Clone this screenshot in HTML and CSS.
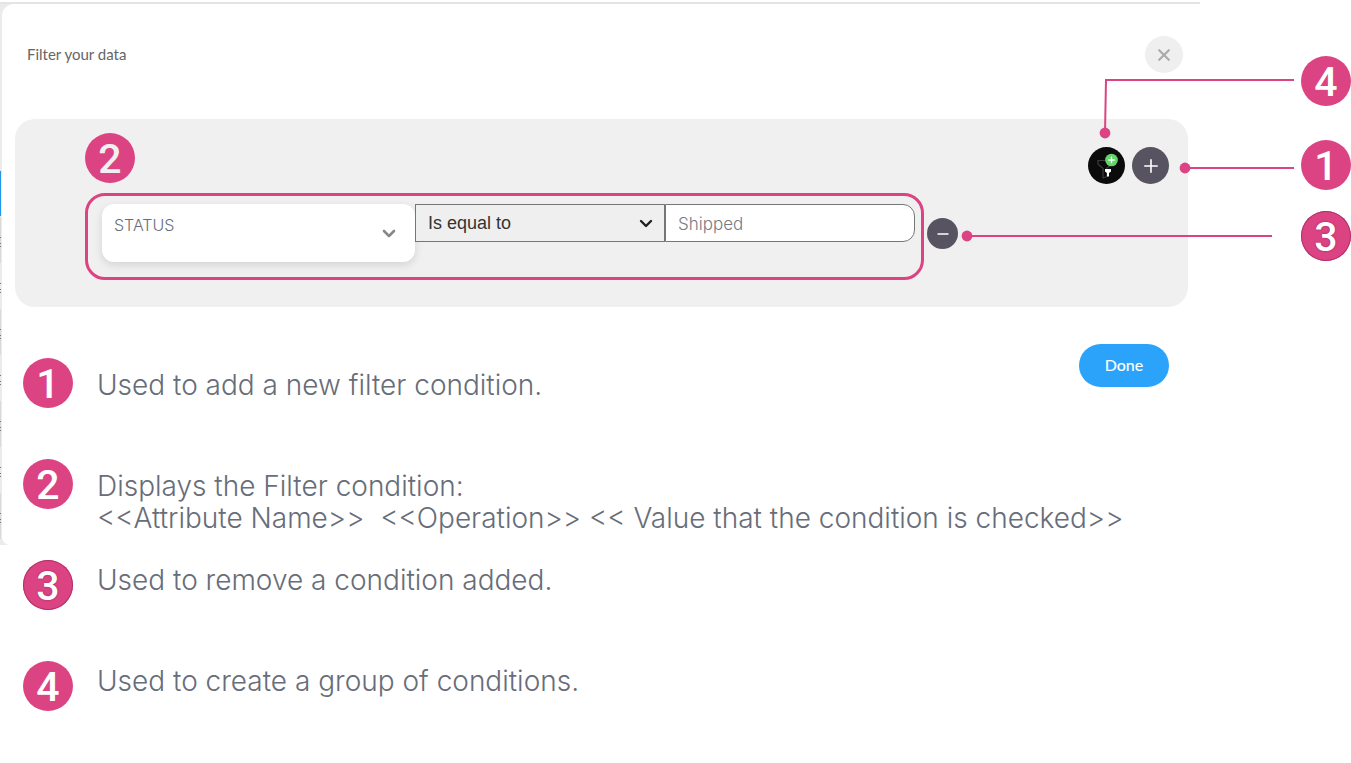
FILE: index.html
```html
<!DOCTYPE html>
<html lang="en">
<head>
<meta charset="utf-8">
<title>Filter your data</title>
<link rel="stylesheet" href="styles.css">
</head>
<body>
<main class="stage">
  <div class="backdrop" aria-hidden="true"><div class="sheet"></div></div>

  <div class="content">
    <header class="header">
      <h1 class="title">Filter your data</h1>
      <button class="close" type="button" aria-label="Close">
        <svg width="14" height="14" viewBox="0 0 14 14"><path d="M2.2 2.2 11.800 11.800M11.800 2.200 2.200 11.800" fill="none" stroke="#aaa" stroke-width="2.200" stroke-linecap="round"/></svg>
      </button>
    </header>

    <section class="panel" aria-label="Filter conditions">
      <div class="panel-head">
        <span class="badge badge-muted">2</span>
        <div class="actions">
          <button class="round round-dark" type="button" aria-label="Add group">
            <svg width="37" height="37" viewBox="0 0 37 37">
              <path d="M10 13.500H24V17L19 21V29.500L15 31V21.500L10 17Z" fill="none" stroke="#3c3c3c" stroke-width="1.200" stroke-linejoin="round"/>
              <path d="M17 22H23V24.500L21 26V29.500H19V26L17 24.500Z" fill="#fff"/>
              <circle cx="23.500" cy="13" r="6.300" fill="#63d669"/>
              <path d="M23.500 9.800V16.200M20.300 13H26.700" stroke="#fff" stroke-width="1.300"/>
            </svg>
          </button>
          <button class="round" type="button" aria-label="Add condition">
            <svg width="14" height="14" viewBox="0 0 14 14"><path d="M7 .8V13.200M.8 7H13.200" stroke="#fff" stroke-width="1.600" stroke-linecap="round"/></svg>
          </button>
        </div>
      </div>

      <div class="condition-row">
        <div class="condition">
          <div class="field field-attribute">
            <select class="attribute" aria-label="Attribute"><option>STATUS</option></select>
            <svg class="chevron" width="14" height="10" viewBox="0 0 14 10"><path d="M2 2 7 7 12 2" fill="none" stroke="#888" stroke-width="2.600" stroke-linecap="round" stroke-linejoin="round"/></svg>
          </div>
          <div class="field">
            <select class="operation" aria-label="Operation"><option>Is equal to</option></select>
            <svg class="chevron" width="14" height="10" viewBox="0 0 14 10"><path d="M2 2 7 7 12 2" fill="none" stroke="#222" stroke-width="2.400" stroke-linecap="round" stroke-linejoin="round"/></svg>
          </div>
          <div class="field">
            <input class="value" type="text" aria-label="Value" value="Shipped">
          </div>
        </div>
        <button class="round round-small" type="button" aria-label="Remove condition">
          <svg width="12" height="4" viewBox="0 0 12 4"><path d="M1 2H11" stroke="#fff" stroke-width="1.400" stroke-linecap="round"/></svg>
        </button>
      </div>
    </section>

    <div class="lower">
      <ol class="legend">
        <li class="item"><span class="badge">1</span><p class="text">Used to add a new filter condition.</p></li>
        <li class="item"><span class="badge">2</span><p class="text">Displays the Filter condition:<br>&lt;&lt;Attribute Name&gt;&gt;&nbsp; &lt;&lt;Operation&gt;&gt; &lt;&lt; Value that the condition is checked&gt;&gt;</p></li>
        <li class="item item-high"><span class="badge badge-ring">3</span><p class="text">Used to remove a condition added.</p></li>
        <li class="item item-high"><span class="badge">4</span><p class="text">Used to create a group of conditions.</p></li>
      </ol>
      <button class="done" type="button">Done</button>
    </div>
  </div>

  <div class="callouts">
    <svg class="lines" width="400" height="280" viewBox="0 0 400 280" aria-hidden="true">
      <path d="M154 133 155 80H343M234 168H343M16 236H321" fill="none" stroke="#dc4383" stroke-width="2"/>
      <g fill="#dc4383"><circle cx="154" cy="133" r="5.400"/><circle cx="234" cy="168" r="5.400"/><circle cx="16" cy="236" r="5.400"/></g>
    </svg>
    <span class="badge pin pin-group">4</span>
    <span class="badge pin pin-add">1</span>
    <span class="badge badge-ring pin pin-remove">3</span>
  </div>
</main>
</body>
</html>
```
FILE: styles.css
```css
* { box-sizing: border-box; }

body {
  margin: 0;
  background: #fff;
  color: #676d79;
  font-family: Inter, "Liberation Sans", sans-serif;
}

button { border: 0; padding: 0; cursor: pointer; }

.stage {
  position: relative;
  display: grid;
  grid-template-columns: minmax(0, 1fr) 151px;
}

.backdrop {
  grid-area: 1 / 1;
  height: 545px;
  padding: 4px 0 0 2px;
  background:
    linear-gradient(#fff 0 2px, #e4e4e4 2px 4px, transparent 4px),
    linear-gradient(#2196ea, #2196ea) 0 171px / 1px 45px no-repeat,
    repeating-linear-gradient(transparent 0 5px, #777 5px 6px, transparent 6px 11px, #777 11px 12px, transparent 12px 14px, #777 14px 15px, transparent 15px 46px) 0 232px / 1px 307px no-repeat,
    repeating-linear-gradient(#dadada 0 46px, #ebebeb 46px 92px) 0 217px / 1px 322px no-repeat,
    #ebebeb;
}

.sheet { height: 100%; background: #fff; border-radius: 12px 0 0 8px; }

.content { grid-area: 1 / 1; min-width: 0; }

.header {
  display: flex;
  align-items: center;
  justify-content: space-between;
  padding: 36px 17px 46px 27px;
}

.title { margin: 0; padding-bottom: 2px; font: 400 15px/20px Lato, sans-serif; color: #666; }

.close {
  display: grid;
  place-items: center;
  width: 38px;
  height: 37px;
  border-radius: 50%;
  background: #efefef;
}

.panel {
  margin: 0 12px 0 15px;
  padding: 14px 19px 27px 70px;
  border-radius: 20px;
  background: #f0f0f0;
}

.panel-head { display: flex; justify-content: space-between; height: 60px; }

.actions { display: flex; gap: 7px; padding-top: 14px; }

.badge {
  flex: none;
  width: 50px;
  height: 50px;
  border-radius: 50%;
  background: #dc4383;
  color: #fff;
  font: 500 41px/52px Roboto, sans-serif;
  text-align: center;
}

.badge-muted { color: #f0f0f0; }

.badge-ring {
  box-shadow: inset 0 0 0 1px #b13069;
  text-shadow: 0 0 2px #8f2253;
}

.round {
  flex: none;
  display: grid;
  place-items: center;
  width: 37px;
  height: 37px;
  border-radius: 50%;
  background: #575361;
}

.round-dark { background: #0b0b0b; }
.round-small { width: 31px; height: 31px; margin-top: 25px; }

.condition-row { display: flex; align-items: flex-start; gap: 3px; }

.condition {
  flex: 0 1 839px;
  min-width: 0;
  display: flex;
  align-items: flex-start;
  padding: 8px 6px 15px 14px;
  border: 3px solid #dc4383;
  border-radius: 20px;
}

.field { position: relative; flex: 250 1 0; min-width: 0; }
.field-attribute { flex-grow: 313; }

.attribute, .operation, .value {
  display: block;
  width: 100%;
  margin: 0;
  appearance: none;
  border-radius: 0;
}

.attribute {
  height: 58px;
  padding: 0 36px 16px 12px;
  border: 0;
  border-radius: 12px;
  background: #fff;
  box-shadow: 0 3px 8px #0000001f;
  color: #676d79;
  font: 300 16px/20px Inter, sans-serif;
}

.operation {
  height: 38px;
  padding: 0 32px 0 12px;
  border: 1px solid #767676;
  background: #efefef;
  color: #333;
  font: 400 18px/20px "Liberation Sans", sans-serif;
}

.value {
  height: 38px;
  padding: 2px 12px 0;
  border: 1px solid #767676;
  border-radius: 0 12px 12px 0;
  background: #fff;
  color: #767b86;
  font: 300 17px/20px Inter, sans-serif;
}

.chevron { position: absolute; right: 12px; top: 50%; margin-top: -4px; pointer-events: none; }
.field-attribute .chevron { right: 19px; }

.lower { display: grid; padding: 37px 31px 0 23px; }

.legend { grid-area: 1 / 1; margin: 0; padding: 14px 0 0; list-style: none; }

.item { display: flex; align-items: flex-start; gap: 24px; height: 101px; }

.text { margin: 0; padding-top: 11px; font-size: 28px; font-weight: 300; line-height: 32px; }
.item-high .text { padding-top: 4px; }

.done {
  grid-area: 1 / 1;
  place-self: start end;
  width: 90px;
  height: 43px;
  padding-bottom: 2px;
  border-radius: 22px;
  background: #2ca3fa;
  color: #fff;
  font: 500 16px/20px Lato, sans-serif;
}

.lines { position: absolute; top: 0; right: 0; pointer-events: none; }
.pin { position: absolute; right: 0; }
.pin-group { top: 56px; }
.pin-add { top: 140px; }
.pin-remove { top: 211px; }
```
